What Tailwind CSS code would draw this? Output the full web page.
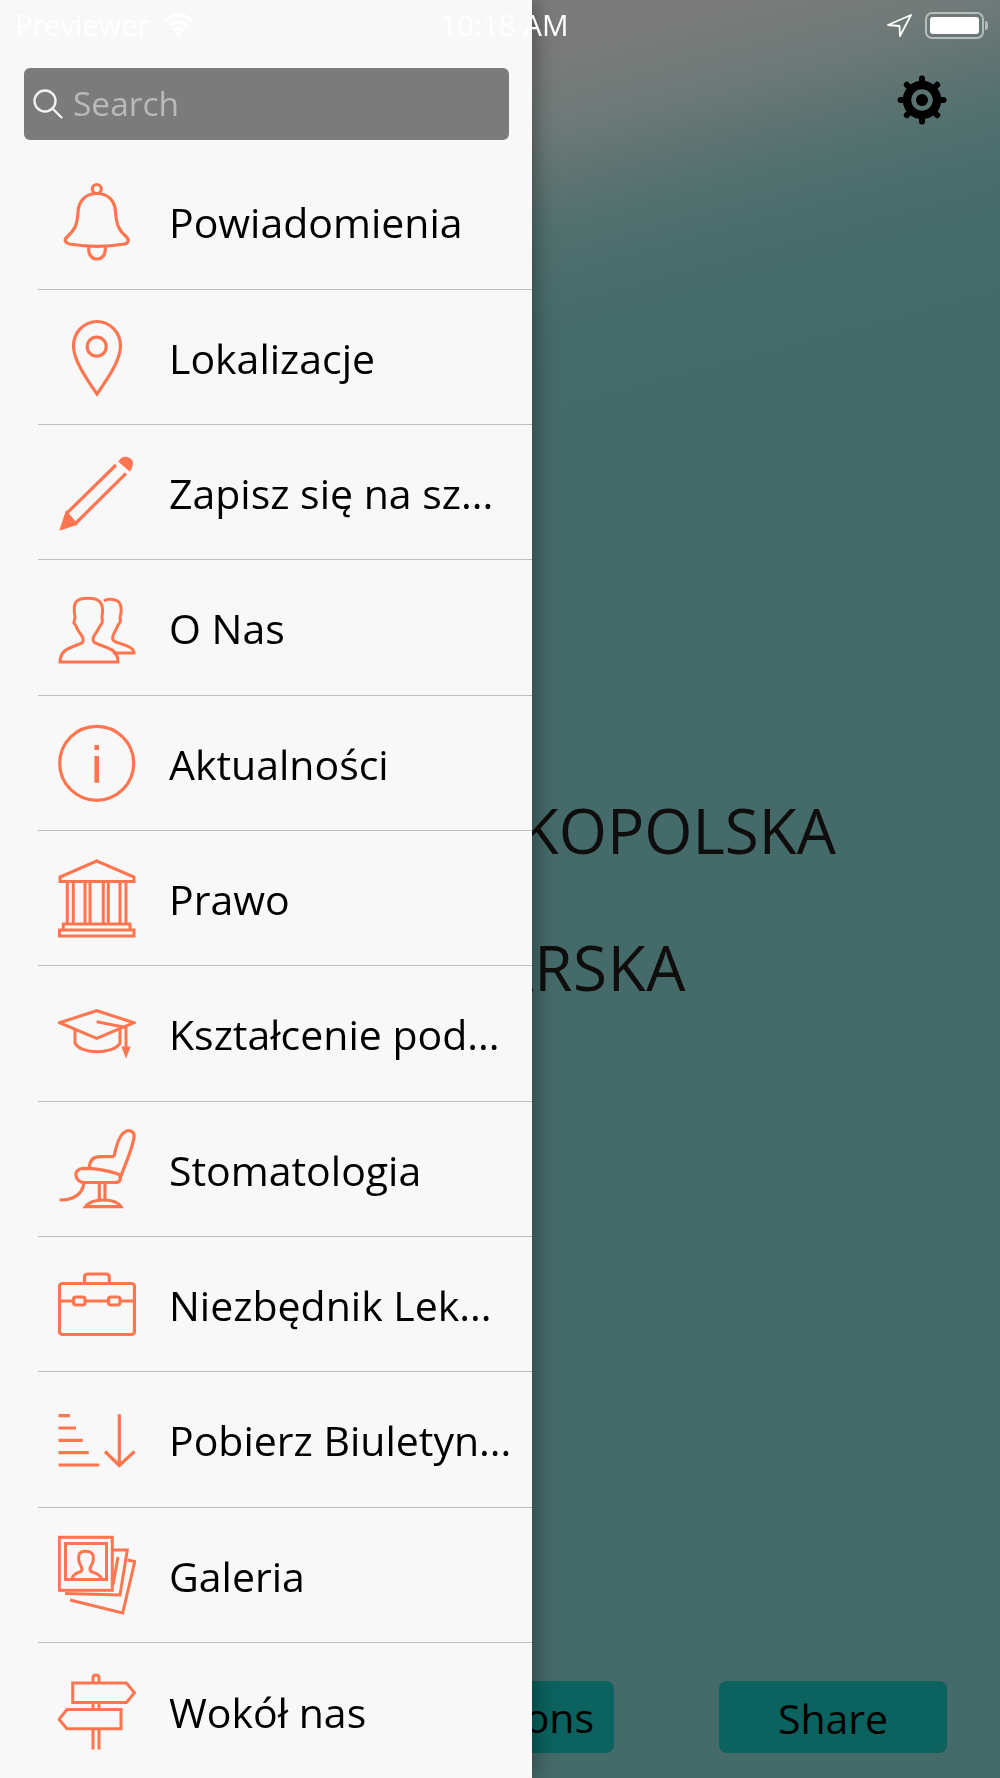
<!DOCTYPE html>
<html lang="pl">
<head>
  <meta charset="UTF-8">
  <meta name="viewport" content="width=device-width, initial-scale=1.0">
  <title>Menu</title>
  <script src="https://cdn.jsdelivr.net/npm/@tailwindcss/browser@4"></script>
</head>
<body class="bg-[#446a69]">
  <div class="relative grid grid-cols-[532px_1fr] w-[1000px] h-[1778px] overflow-hidden blur-[0.6px] font-['Open_Sans',sans-serif] text-black">

    <!-- Drawer -->
    <aside class="relative z-10 h-full bg-[#f8f8f8] pt-[68px] shadow-[0_0_22px_rgba(0,0,0,0.45)]">
      <div class="ml-[24px] flex h-[72px] w-[485px] items-center rounded-md bg-[#7b7b7b] pl-[8px] text-[33.5px] text-[#b9b9b9]">
        <svg class="h-[32px] w-[32px]" viewBox="0 0 32 32" fill="none" stroke="#f2f2f2" stroke-width="2.4" stroke-linecap="round"><circle cx="13" cy="13" r="10.5"/><path d="M21 21l8.5 8.5"/></svg>
        <span class="ml-[9px] pb-[2px]">Search</span>
      </div>

      <ul class="mt-[14.5px] ml-[38px] stroke-[#ff7550] text-[41px]">
        <!-- Powiadomienia -->
        <li class="flex h-[135.33px] items-center border-b-[1.5px] border-[#bdbdbd]">
          <svg class="ml-[20px] h-[84px] w-[78px] shrink-0" viewBox="0 0 78 84" fill="none" stroke-width="3.2">
            <g transform="translate(3.5 0)">
              <circle cx="35.3" cy="9" r="4.5"/>
              <path d="M35.3 13.5C24 13.5 17 21 16.5 32C16 46 12 51 5.5 57C2 60 4 63 8 64C25 67 46 67 63 64C67 63 68 60 65 57C58 51 55 46 54 32C53.5 21 47 13.5 35.3 13.5Z"/>
              <path d="M27.5 66C26 74 30 79 35.5 79C41 79 45 74 43.5 66"/>
            </g>
          </svg>
          <span class="ml-[33px] whitespace-nowrap pt-[3px]">Powiadomienia</span>
        </li>
        <!-- Lokalizacje -->
        <li class="flex h-[135.33px] items-center border-b-[1.5px] border-[#bdbdbd]">
          <svg class="ml-[20px] h-[84px] w-[78px] shrink-0" viewBox="0 0 78 84" fill="none" stroke-width="3.2">
            <path d="M39 79C30 66 15.5 46 15.5 31A23.5 24.5 0 0 1 62.5 31C62.5 46 48 66 39 79Z"/>
            <circle cx="38.7" cy="31.7" r="9.5"/>
          </svg>
          <span class="ml-[33px] whitespace-nowrap pt-[3px]">Lokalizacje</span>
        </li>
        <!-- Zapisz -->
        <li class="flex h-[135.33px] items-center border-b-[1.5px] border-[#bdbdbd]">
          <svg class="ml-[20px] h-[84px] w-[78px] shrink-0" viewBox="0 0 78 84" fill="none" stroke-width="3.2">
            <path d="M8.7 63.3L58 15M17 74L68 23.3M9 64L17 73"/>
            <path d="M3.7 78.3L8.7 63.3L17 74Z" fill="#ff7550"/>
            <path d="M60.3 11.7C62 8 66 6 69 7C74 8 76 12 74.7 15.5C74 18 73 20 72 21.7Z" fill="#ff7550" stroke="none"/>
          </svg>
          <span class="ml-[33px] whitespace-nowrap pt-[3px]">Zapisz się na sz...</span>
        </li>
        <!-- O Nas -->
        <li class="flex h-[135.33px] items-center border-b-[1.5px] border-[#bdbdbd]">
          <svg class="ml-[20px] h-[84px] w-[78px] shrink-0" viewBox="0 0 78 84" fill="none" stroke-width="3">
            <path d="M2 76C2 67 8 63 14 61L24 57C26 55 25 52 24 50C21 46 19 43 18 40L16 37C16 34 17 33 17 31C16 25 15.5 19 18 16C22 11 38 11 42 16C45 19 45 25 44 31C44 33 45 34 44 37L42 40C40 44 38 47 36 50C35 52 34 55 37 57L50 62C56 64 60 69 60 76Z"/>
            <path d="M46 15C50 12 60 13 62 18C64 22 63 28 62 32C63 34 62 37 60 39C59 43 56 46 55 50C54 53 55 55 58 56C66 59 76 61 76 67H55"/>
          </svg>
          <span class="ml-[33px] whitespace-nowrap pt-[3px]">O Nas</span>
        </li>
        <!-- Aktualności -->
        <li class="flex h-[135.33px] items-center border-b-[1.5px] border-[#bdbdbd]">
          <svg class="ml-[20px] h-[84px] w-[78px] shrink-0" viewBox="0 0 78 84" fill="none" stroke-width="3.2">
            <circle cx="38.7" cy="42.3" r="37"/>
            <path d="M38.7 24v5M38.7 35v26.7" stroke-width="4.6"/>
          </svg>
          <span class="ml-[33px] whitespace-nowrap pt-[3px]">Aktualności</span>
        </li>
        <!-- Prawo -->
        <li class="flex h-[135.33px] items-center border-b-[1.5px] border-[#bdbdbd]">
          <svg class="ml-[20px] h-[84px] w-[78px] shrink-0" viewBox="0 0 78 84" fill="none" stroke-width="3">
            <path d="M38.7 5L2 21V25.5H76V21Z"/>
            <path d="M9.3 27V67M15.3 27V67M27 27V67M32 27V67M45.3 27V67M50.3 27V67M62 27V67M68 27V67"/>
            <path d="M5.3 74V68H72V74"/>
            <path d="M1.5 80V74H76V80Z"/>
          </svg>
          <span class="ml-[33px] whitespace-nowrap pt-[3px]">Prawo</span>
        </li>
        <!-- Kształcenie -->
        <li class="flex h-[135.33px] items-center border-b-[1.5px] border-[#bdbdbd]">
          <svg class="ml-[20px] h-[84px] w-[78px] shrink-0" viewBox="0 0 78 84" fill="none" stroke-width="3">
            <path d="M1.5 30.7L38.7 18.7L76 30.7L38.7 46.3Z"/>
            <path d="M17 38V51C20 57 30 59.7 39 59.7C48 59.7 59 57 62 51V38"/>
            <path d="M38.7 29.7L68 35.5V58"/>
            <path d="M65.5 56H70.5L68 62.5Z" fill="#ff7550"/>
          </svg>
          <span class="ml-[33px] whitespace-nowrap pt-[3px]">Kształcenie pod...</span>
        </li>
        <!-- Stomatologia -->
        <li class="flex h-[135.33px] items-center border-b-[1.5px] border-[#bdbdbd]">
          <svg class="ml-[20px] h-[84px] w-[78px] shrink-0" viewBox="0 0 78 84" fill="none" stroke-width="3.2">
            <path d="M56 29.7C58 20 61 9 66 5.5C71 2 77 4 76 10C75 20 68 36 62 51"/>
            <path d="M31.3 41.3C31.5 33 36 29.7 42 29.7H56"/>
            <path d="M25 41.3C38 41.3 52 44 60 47C64 49 63 55 58 55.5H26C17 55.5 14 42 25 41.3Z"/>
            <path d="M1.5 73C14 73 24 69 26 56"/>
            <path d="M41.3 56V73M47 56V73"/>
            <path d="M27.5 79.7C31 75 38 73 45 73C53 73 60 75 63 79.7Z"/>
          </svg>
          <span class="ml-[33px] whitespace-nowrap pt-[3px]">Stomatologia</span>
        </li>
        <!-- Niezbednik -->
        <li class="flex h-[135.33px] items-center border-b-[1.5px] border-[#bdbdbd]">
          <svg class="ml-[20px] h-[84px] w-[78px] shrink-0" viewBox="0 0 78 84" fill="none" stroke-width="3.2">
            <rect x="1.5" y="21.5" width="75" height="51" rx="3"/>
            <path d="M26.5 21.5V15C26.5 13 28 12 30 12H48C50 12 51.3 13 51.3 15V21.5"/>
            <path d="M1.5 39H15M27 39H50M62 39H76.5"/>
            <rect x="15.5" y="35" width="11.5" height="8" rx="2.5"/>
            <rect x="50.5" y="35" width="11.5" height="8" rx="2.5"/>
          </svg>
          <span class="ml-[33px] whitespace-nowrap pt-[3px]">Niezbędnik Lek...</span>
        </li>
        <!-- Pobierz -->
        <li class="flex h-[135.33px] items-center border-b-[1.5px] border-[#bdbdbd]">
          <svg class="ml-[20px] h-[84px] w-[78px] shrink-0" viewBox="0 0 78 84" fill="none" stroke-width="3.2">
            <path d="M0.5 17.7H12M0.5 30H18M0.5 42.3H24.7M0.5 54.7H30.7M0.5 67H41.3"/>
            <path d="M61.3 16.3V68M47 53.5L61.3 67.5L76.5 53.5"/>
          </svg>
          <span class="ml-[33px] whitespace-nowrap pt-[3px]">Pobierz Biuletyn...</span>
        </li>
        <!-- Galeria -->
        <li class="flex h-[135.33px] items-center border-b-[1.5px] border-[#bdbdbd]">
          <svg class="ml-[20px] h-[84px] w-[78px] shrink-0" viewBox="0 0 78 84" fill="none" stroke-width="3">
            <rect x="1.3" y="4.3" width="53" height="53"/>
            <rect x="7.5" y="10.5" width="41" height="36"/>
            <path d="M14 45.5C15 41 19 40 23 38.5C25 37 24 35 23 33C21 30 20 27 21 22C22 17 33 17 35 22C36 27 35 30 33 33C32 35 31 37 33 38.5C37 40 42 41 43.5 45.5"/>
            <path d="M54.7 17H69.3L62 62L7 60.5"/>
            <path d="M69.5 27L76.8 28.5L64.7 80L12 67"/>
            <path d="M60 24L55 52"/>
          </svg>
          <span class="ml-[33px] whitespace-nowrap pt-[3px]">Galeria</span>
        </li>
        <!-- Wokol nas -->
        <li class="flex h-[135.33px] items-center">
          <svg class="ml-[20px] h-[84px] w-[78px] shrink-0" viewBox="0 0 78 84" fill="none" stroke-width="3">
            <path d="M14.7 14H68.5L76.5 23.7L68.5 33.5H14.7Z"/>
            <path d="M63 40.5H9L1 50.3L9 59.7H63Z"/>
            <path d="M35 14V9C35 5 41 5 41 9V14M35 33.5V40.5M41 33.5V40.5M35 59.7V80.5M41 59.7V80.5"/>
          </svg>
          <span class="ml-[33px] whitespace-nowrap pt-[3px]">Wokół nas</span>
        </li>
      </ul>
    </aside>

    <!-- Screen behind the drawer -->
    <main class="flex h-full min-w-0 flex-col overflow-hidden bg-[#446a69] bg-[linear-gradient(165deg,#7b7b7b_0px,#797b7a_60px,#6f7a78_120px,#5c7371_190px,#50706e_230px,#456b6a_320px,#446a69_420px)]">
      <div class="mt-[75px] mr-[53px] self-end">
        <svg class="h-[50px] w-[50px]" viewBox="0 0 50 50" fill="none" stroke="#000">
          <circle cx="25" cy="25" r="15" stroke-width="8.5"/>
          <circle cx="25" cy="25" r="6" fill="#000" stroke="none"/>
          <path d="M25 3.5V8M25 42V46.5M3.5 25H8M42 25H46.5M9.8 9.8L13 13M37 37L40.2 40.2M40.2 9.8L37 13M13 37L9.8 40.2" stroke-width="6" stroke-linecap="round"/>
        </svg>
      </div>

      <div class="mt-[637px] flex flex-col items-end whitespace-nowrap text-[62px] leading-[137px] text-[#100e0c]">
        <div class="mr-[164px]">WIELKOPOLSKA</div>
        <div class="mr-[314px] tracking-[0.6px]">IZBA LEKARSKA</div>
      </div>

      <div class="mt-auto mb-[25px] flex justify-end gap-[105px] pr-[53px] text-[41px]">
        <div class="flex h-[72px] w-[330px] shrink-0 items-center justify-end rounded-lg bg-[#0b625e] pr-[20px]">Notifications</div>
        <div class="flex h-[72px] w-[228px] shrink-0 items-center justify-center rounded-lg bg-[#0b625e] pt-[2px]">Share</div>
      </div>
    </main>

    <!-- Status bar -->
    <div class="absolute top-0 left-0 z-20 grid h-[50px] w-full grid-cols-[1fr_auto_1fr] items-center pl-[15px] pr-[12px] text-[29px] text-white">
      <div class="flex items-center gap-[13px]">
        <span>Previewer</span>
        <svg class="h-[24px] w-[33px]" viewBox="0 0 32 24" fill="none" stroke="#fff" stroke-width="3.6"><path d="M2 8C10 0 22 0 30 8M7 13C12 8 20 8 25 13M11.5 17.5C14 15 18 15 20.5 17.5"/><path d="M16 23.5L12.5 19.5C14.5 18 17.5 18 19.5 19.5Z" fill="#fff" stroke="none"/></svg>
      </div>
      <div class="pl-[6px] text-[29.5px] font-medium">10:18 AM</div>
      <div class="flex items-center justify-end gap-[13px]">
        <svg class="h-[23px] w-[25px]" viewBox="0 0 25 23" fill="none" stroke="#fff" stroke-width="1.8" stroke-linejoin="round"><path d="M1 11L24 1L13 22L12.5 12Z"/></svg>
        <div class="flex items-center gap-[1px]">
          <div class="h-[27px] w-[59px] rounded-[7px] border-2 border-white/50 p-[3px]"><div class="h-full w-full rounded-[3px] bg-white"></div></div>
          <div class="h-[9px] w-[3px] rounded-r-full bg-white/50"></div>
        </div>
      </div>
    </div>
  </div>
</body>
</html>
